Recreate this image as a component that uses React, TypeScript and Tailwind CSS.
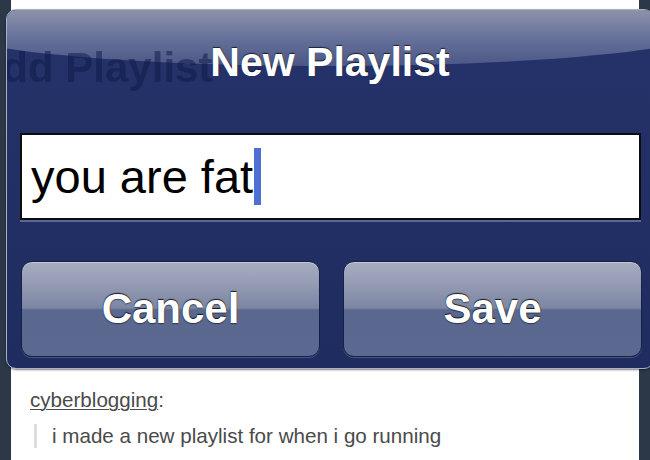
const sans = { fontFamily: '"Liberation Sans", Arial, sans-serif' };

function GlossButton({ label }: { label: string }) {
  return (
    <button
      className="relative flex h-[96px] flex-1 items-center justify-center overflow-hidden rounded-[11px] border-[1.5px] border-[#16214a] bg-[linear-gradient(to_bottom,#a7adc0_0%,#939ab2_25%,#7c86a3_49%,#5a6890_51%,#5b6991_100%)] shadow-[0_1px_0_rgba(150,160,200,0.35),inset_0_1px_0_rgba(255,255,255,0.35)]"
    >
      <span className="text-[42px] leading-none font-bold text-white [text-shadow:0_-1px_1px_rgba(0,0,0,0.85),0_1px_1px_rgba(0,0,0,0.5)]">
        {label}
      </span>
    </button>
  );
}

export default function App() {
  return (
    <div className="relative h-[460px] w-[650px] overflow-hidden bg-[#2c3748]" style={sans}>
      {/* page behind the alert */}
      <div className="mx-[11px] h-full bg-white pt-[388px] text-[20.6px] leading-[24px] text-[#4a4a4a]">
        <div className="pl-[19px]">
          <span className="underline decoration-1 underline-offset-2">cyberblogging</span>:
        </div>
        <div className="mt-[12px] ml-[23px] border-l-[3px] border-[#dedede] pl-[15px]">
          i made a new playlist for when i go running
        </div>
      </div>

      {/* alert */}
      <div className="absolute top-[9px] left-[6px] z-10 flex h-[360px] w-[648px] flex-col overflow-hidden rounded-[10px] border border-[#aab1c6] bg-[linear-gradient(to_bottom,#25336b,#1f2c5f)] shadow-[0_1px_2px_rgba(0,0,0,0.5)]">
        <div className="relative h-[123px] shrink-0">
          <div className="absolute top-[-24px] left-[-68px] h-[80px] w-[780px] rounded-[50%] bg-[linear-gradient(to_bottom,#a2a8bc_0%,#8d93aa_30%,#66719a_65%,#4b5785_100%)]" />
          <div className="absolute top-[37px] left-[-35px] text-[42px] leading-none font-bold whitespace-nowrap text-[rgba(14,24,70,0.5)] blur-[0.6px]">
            Add Playlist
          </div>
          <div className="relative pt-[32px] text-center text-[41px] leading-none font-bold text-white [text-shadow:0_-1px_1px_rgba(0,0,0,0.7)]">
            New Playlist
          </div>
        </div>

        <div className="mr-[12px] ml-[13px] flex h-[87px] items-center border-2 border-[#0d0d0d] bg-white pl-[9px] shadow-[0_2px_0_rgba(140,150,185,0.55)]">
          <span className="text-[47px] leading-none text-black">you are fat</span>
          <span className="ml-[1px] inline-block h-[57px] w-[7px] bg-[#4d70d4]" />
        </div>

        <div className="mt-[41px] mr-[11px] ml-[14px] flex gap-[23px]">
          <GlossButton label="Cancel" />
          <GlossButton label="Save" />
        </div>
      </div>
    </div>
  );
}
